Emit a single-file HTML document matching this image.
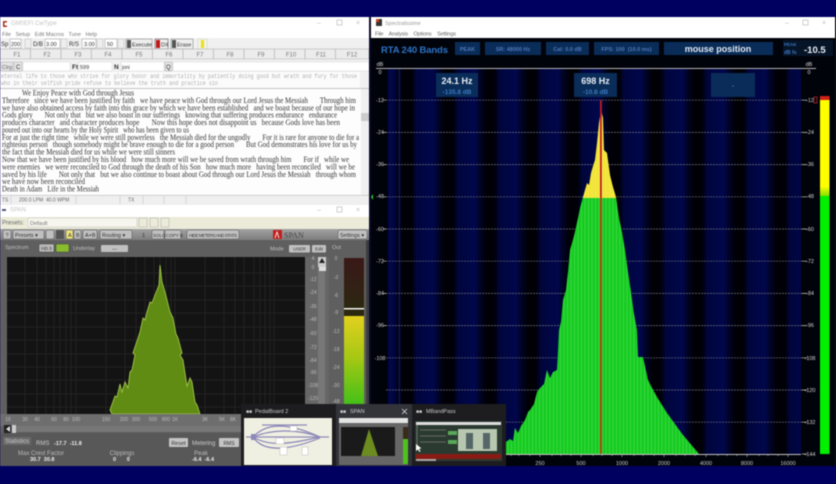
<!DOCTYPE html>
<html><head><meta charset="utf-8"><style>
html,body{margin:0;padding:0;background:#000060;width:836px;height:484px;overflow:hidden}
svg{display:block;filter:blur(.55px)}
text{font-family:"Liberation Sans",sans-serif;white-space:pre}
.s{font-family:"Liberation Serif",serif;font-size:8px;fill:#333}
.m{font-family:"Liberation Mono",monospace;font-size:6.5px;fill:#b0b0b0}
.t{font-size:6px;fill:#777;text-anchor:middle}
.g{font-size:5px;fill:#bbb;text-anchor:middle}
.l{font-size:6px;fill:#bbb;text-anchor:middle}
.b{fill:#4f78b8;font-weight:bold;font-size:5.5px;text-anchor:middle}
.d{font-size:5.5px;fill:#c0c0c0}
</style></head><body>
<svg width="836" height="484" viewBox="0 0 836 484" xmlns="http://www.w3.org/2000/svg">
<defs>
<linearGradient id="bands" gradientUnits="userSpaceOnUse" x1="540" x2="581.500" y1="0" y2="0" spreadMethod="repeat">
<stop offset="0" stop-color="#00053a"/><stop offset=".42" stop-color="#00074c"/><stop offset=".55" stop-color="#000326"/><stop offset=".72" stop-color="#000005"/><stop offset=".9" stop-color="#000007"/><stop offset="1" stop-color="#00042c"/>
</linearGradient>
<linearGradient id="spec" gradientUnits="userSpaceOnUse" x1="0" x2="0" y1="100" y2="454">
<stop offset="0" stop-color="#f2e432"/><stop offset=".2768" stop-color="#f2e432"/><stop offset=".2768" stop-color="#14cc1e"/><stop offset="1" stop-color="#14cc1e"/>
</linearGradient>
<pattern id="bars" width="3.500" height="10" patternUnits="userSpaceOnUse"><rect width="1" height="10" fill="#fff" opacity=".18"/></pattern>
<linearGradient id="meter" x1="0" x2="0" y1="0" y2="1"><stop offset="0" stop-color="#e2d01e"/><stop offset=".45" stop-color="#a8c814"/><stop offset="1" stop-color="#40c018"/></linearGradient>
<linearGradient id="mtop" x1="0" x2="0" y1="0" y2="1"><stop offset="0" stop-color="#3a1818"/><stop offset="1" stop-color="#2a2a10"/></linearGradient>
<linearGradient id="tb" x1="0" x2="0" y1="0" y2="1"><stop offset="0" stop-color="#a2a2a2"/><stop offset="1" stop-color="#7e7e7e"/></linearGradient>
<linearGradient id="mband" x1="0" x2="0" y1="0" y2="1"><stop offset="0" stop-color="#ffff00"/><stop offset=".9" stop-color="#ffff00"/><stop offset="1" stop-color="#80e000"/></linearGradient>
</defs>

<rect width="836" height="484" fill="#000060"/>

<!-- CwType window -->
<rect x="0" y="17" width="369" height="188" fill="#f4f4f4"/>
<rect x="0" y="17" width="369" height="21" fill="#fff"/>
<path d="M3 21h4v1.500h-2.500v3h2.500v1.500h-4z" fill="#b03020"/>
<text x="11" y="25" font-size="6" fill="#c4c4c4">GM0EFI CwType</text>
<text x="317" y="25" font-size="7" fill="#bbb">–</text><rect x="337" y="20" width="5" height="5" fill="none" stroke="#bbb" stroke-width=".7"/><text x="356" y="25" font-size="7" fill="#bbb">×</text>
<text x="2" y="36" font-size="5.500" fill="#777" textLength="95">File   Setup   Edit Macros   Tune   Help</text>
<rect x="0" y="38" width="369" height="11" fill="#f0f0f0"/>
<text x="1" y="46" font-size="6" fill="#333">Sp</text>
<rect x="10" y="39" width="11" height="9" fill="#fff" stroke="#999" stroke-width=".5"/><text x="11" y="46" font-size="5.500" fill="#333">200</text>
<rect x="25" y="39" width="6" height="9" fill="#eee" stroke="#bbb" stroke-width=".5"/>
<text x="33" y="46" font-size="6" fill="#333">D/B</text>
<rect x="45" y="39" width="15" height="9" fill="#fff" stroke="#999" stroke-width=".5"/><text x="46" y="46" font-size="5.500" fill="#333">3.00</text>
<rect x="61" y="39" width="6" height="9" fill="#eee" stroke="#bbb" stroke-width=".5"/>
<text x="69" y="46" font-size="6" fill="#333">R/S</text>
<rect x="82" y="39" width="14" height="9" fill="#fff" stroke="#999" stroke-width=".5"/><text x="84" y="46" font-size="5.500" fill="#333">3.00</text>
<rect x="97" y="39" width="6" height="9" fill="#eee" stroke="#bbb" stroke-width=".5"/>
<rect x="105" y="39" width="12" height="9" fill="#fff" stroke="#999" stroke-width=".5"/><text x="107" y="46" font-size="5.500" fill="#333">50</text>
<rect x="118" y="39" width="6" height="9" fill="#eee" stroke="#bbb" stroke-width=".5"/>
<rect x="126" y="39" width="26" height="10" fill="#eee" stroke="#888" stroke-width=".6"/><rect x="127" y="40" width="4" height="8" fill="#555"/><text x="132" y="46.500" font-size="5.500" fill="#333">Execute</text>
<rect x="155" y="39" width="13" height="10" fill="#eee" stroke="#555" stroke-width=".6"/><rect x="156" y="40" width="4" height="8" fill="#c01818"/><text x="161" y="46.500" font-size="5.500" fill="#333">DX</text>
<rect x="171" y="39" width="22" height="10" fill="#eee" stroke="#888" stroke-width=".6"/><rect x="172" y="40" width="4" height="8" fill="#555"/><text x="177" y="46.500" font-size="5.500" fill="#333">Erase</text>
<rect x="198" y="39" width="9" height="10" fill="#f4f4e0" stroke="#ccc" stroke-width=".5"/><rect x="201" y="40" width="3" height="8" fill="#e8e020"/>

<g fill="#ececec" stroke="#b4b4b4" stroke-width=".6">
<rect x="0" y="49" width="30.500" height="10"/><rect x="30.500" y="49" width="30.500" height="10"/><rect x="61" y="49" width="30.500" height="10"/><rect x="91.500" y="49" width="30.500" height="10"/><rect x="122" y="49" width="30.500" height="10"/><rect x="152.500" y="49" width="30.500" height="10"/><rect x="183" y="49" width="30.500" height="10"/><rect x="213.500" y="49" width="30.500" height="10"/><rect x="244" y="49" width="30.500" height="10"/><rect x="274.500" y="49" width="30.500" height="10"/><rect x="305" y="49" width="30.500" height="10"/><rect x="335.500" y="49" width="33.500" height="10"/>
</g>
<g><text class="t" x="17" y="56.500">F1</text><text class="t" x="47" y="56.500">F2</text><text class="t" x="78" y="56.500">F3</text><text class="t" x="108" y="56.500">F4</text><text class="t" x="139" y="56.500">F5</text><text class="t" x="169" y="56.500">F6</text><text class="t" x="200" y="56.500">F7</text><text class="t" x="230" y="56.500">F8</text><text class="t" x="261" y="56.500">F9</text><text class="t" x="291" y="56.500">F10</text><text class="t" x="321" y="56.500">F11</text><text class="t" x="352" y="56.500">F12</text></g>

<rect x="0" y="60" width="369" height="12" fill="#f0f0f0"/>
<rect x="1" y="62" width="12" height="9" fill="#e4e4e4" stroke="#aaa" stroke-width=".5"/><text x="2" y="69" font-size="5.500" fill="#666">Clrg</text>
<rect x="14" y="62" width="8" height="9" fill="#e4e4e4" stroke="#aaa" stroke-width=".5"/><text x="16" y="69" font-size="6" fill="#333">C</text>
<rect x="23" y="62" width="47" height="9" fill="#fff" stroke="#ccc" stroke-width=".4"/>
<text x="72" y="69" font-size="6.500" fill="#333" font-weight="bold">Ft</text>
<rect x="79" y="62" width="33" height="9" fill="#fff" stroke="#ccc" stroke-width=".4"/><text x="80" y="69" font-size="5.500" fill="#333">599</text>
<text x="114" y="69" font-size="6.500" fill="#333" font-weight="bold">N</text>
<rect x="121" y="62" width="43" height="9" fill="#fff" stroke="#ccc" stroke-width=".4"/><text x="122" y="69" font-size="5" fill="#333">joni</text>
<rect x="165" y="62" width="7" height="9" fill="#e4e4e4" stroke="#aaa" stroke-width=".5"/><text x="166" y="69" font-size="6" fill="#333">Q</text>
<rect x="173" y="62" width="196" height="9" fill="#fff" stroke="#ccc" stroke-width=".4"/>

<rect x="0" y="72" width="369" height="17" fill="#fbfbfb"/>
<rect x="0" y="88" width="369" height="1" fill="#c4c4c4"/>
<text class="m" x="1" y="78" textLength="356" lengthAdjust="spacingAndGlyphs">eternal life to those who strive for glory honor and immortality by patiently doing good but wrath and fury for those</text>
<text class="m" x="1" y="85" textLength="217" lengthAdjust="spacingAndGlyphs">who in their selfish pride refuse to believe the truth and practice sin</text>
<rect x="360" y="72" width="9" height="16" fill="#f0f0f0"/>

<rect x="0" y="89" width="369" height="106" fill="#fdfdfd"/>
<rect x="361" y="89" width="8" height="106" fill="#f0f0f0"/><rect x="361" y="113" width="8" height="8" fill="#ccc"/>
<text class="s" x="22" y="95.500" textLength="112" lengthAdjust="spacingAndGlyphs">We Enjoy Peace with God through Jesus</text>
<text class="s" x="2" y="102.900" textLength="354" lengthAdjust="spacingAndGlyphs">Therefore   since we have been justified by faith   we have peace with God through our Lord Jesus the Messiah       Through him</text>
<text class="s" x="2" y="110.300" textLength="353" lengthAdjust="spacingAndGlyphs">we have also obtained access by faith into this grace by which we have been established   and we boast because of our hope in</text>
<text class="s" x="2" y="117.700" textLength="335" lengthAdjust="spacingAndGlyphs">Gods glory       Not only that   but we also boast in our sufferings   knowing that suffering produces endurance   endurance</text>
<text class="s" x="2" y="125" textLength="338" lengthAdjust="spacingAndGlyphs">produces character   and character produces hope       Now this hope does not disappoint us   because Gods love has been</text>
<text class="s" x="2" y="132.400" textLength="187" lengthAdjust="spacingAndGlyphs">poured out into our hearts by the Holy Spirit   who has been given to us</text>
<text class="s" x="2" y="139.800" textLength="357" lengthAdjust="spacingAndGlyphs">For at just the right time   while we were still powerless   the Messiah died for the ungodly       For it is rare for anyone to die for a</text>
<text class="s" x="2" y="147.200" textLength="355" lengthAdjust="spacingAndGlyphs">righteous person   though somebody might be brave enough to die for a good person       But God demonstrates his love for us by</text>
<text class="s" x="2" y="154.600" textLength="173" lengthAdjust="spacingAndGlyphs">the fact that the Messiah died for us while we were still sinners</text>
<text class="s" x="2" y="162" textLength="347" lengthAdjust="spacingAndGlyphs">Now that we have been justified by his blood   how much more will we be saved from wrath through him       For if   while we</text>
<text class="s" x="2" y="169.400" textLength="353" lengthAdjust="spacingAndGlyphs">were enemies   we were reconciled to God through the death of his Son   how much more   having been reconciled   will we be</text>
<text class="s" x="2" y="176.800" textLength="354" lengthAdjust="spacingAndGlyphs">saved by his life       Not only that   but we also continue to boast about God through our Lord Jesus the Messiah   through whom</text>
<text class="s" x="2" y="184.200" textLength="83" lengthAdjust="spacingAndGlyphs">we have now been reconciled</text>
<text class="s" x="2" y="191.600" textLength="97" lengthAdjust="spacingAndGlyphs">Death in Adam   Life in the Messiah</text>

<rect x="0" y="195" width="369" height="10" fill="#efefef"/>
<rect x="0" y="195" width="369" height=".6" fill="#bbb"/>
<text x="2" y="201.500" font-size="5" fill="#666">TS</text><text x="19" y="201.500" font-size="5" fill="#666">200.0 LPM  40.0 WPM</text><text x="128" y="201.500" font-size="5" fill="#666">TX</text>
<path d="M11 196v8M76 196v8M120 196v8M143 196v8M164 196v8M186 196v8" stroke="#c4c4c4" stroke-width=".6"/>

<!-- SPAN window -->
<rect x="0" y="205" width="369" height="12" fill="#fff"/>
<path d="M2 209h4v2h-4z" fill="#557"/>
<text x="10" y="211.500" font-size="6" fill="#c4c4c4">SPAN</text>
<text x="317" y="212" font-size="7" fill="#bbb">–</text><rect x="337" y="207" width="5" height="5" fill="none" stroke="#bbb" stroke-width=".7"/><text x="356" y="212" font-size="7" fill="#bbb">×</text>
<rect x="0" y="217" width="369" height="12" fill="#ecebd9"/>
<text x="2" y="224.500" font-size="6" fill="#666">Presets:</text>
<rect x="28" y="218" width="109" height="9" fill="#f6f6ee" stroke="#c4c4c4" stroke-width=".5"/><text x="30" y="225" font-size="5.500" fill="#777">Default</text>
<rect x="139" y="218" width="8" height="9" fill="#ecebd9" stroke="#aaa" stroke-width=".5"/>
<rect x="150" y="218" width="8" height="9" fill="#ecebd9" stroke="#aaa" stroke-width=".5"/>
<rect x="161" y="218" width="8" height="9" fill="#ecebd9" stroke="#aaa" stroke-width=".5"/>

<rect x="0" y="229" width="369" height="11" fill="url(#tb)"/>
<g fill="#c0c0c0" stroke="#555" stroke-width=".5">
<rect x="3" y="230" width="8" height="9" rx="1.500"/><rect x="13" y="230" width="31" height="9" rx="1.500"/><rect x="46" y="230" width="8" height="9" rx="1.500"/><rect x="74" y="230" width="7" height="9" rx="1"/><rect x="83" y="230" width="14" height="9" rx="1.500"/><rect x="100" y="230" width="32" height="9" rx="1.500"/><rect x="152" y="230" width="12" height="9" rx="1"/><rect x="165" y="230" width="16" height="9" rx="1"/><rect x="187" y="230" width="52" height="9" rx="1.500"/><rect x="338" y="230" width="29" height="9" rx="1.500"/>
</g>
<rect x="56" y="230" width="8" height="9" fill="#555"/>
<rect x="66" y="230" width="7" height="9" rx="1" fill="#efe47a" stroke="#555" stroke-width=".5"/>
<g font-size="5.500" fill="#333"><text x="5.500" y="237">?</text><text x="15" y="237">Presets ▾</text><text x="68" y="237">A</text><text x="76" y="237">B</text><text x="85" y="237">A+B</text><text x="102" y="237">Routing ▾</text><text x="142" y="237">1</text><text x="153" y="237" font-size="4.500">SOLO</text><text x="166" y="237" font-size="4.500">COPY B</text><text x="189" y="237" font-size="4.500" textLength="48">HIDE METERS AND STATS</text><text x="340" y="237">Settings ▾</text></g>
<rect x="273" y="230" width="9" height="9" fill="#c02020"/><path d="M275 238l2-6 2 6" stroke="#fff" stroke-width=".8" fill="none"/>
<text x="284" y="238" font-size="8" fill="#444" style="font-family:'Liberation Serif',serif">SPAN</text>

<!-- SPAN body -->
<rect x="0" y="240" width="369" height="226" fill="#5f5f5f"/>
<rect x="366" y="240" width="3" height="165" fill="#3c3c3c"/>
<text class="d" x="5" y="249" font-size="6">Spectrum</text>
<rect x="39" y="244" width="15" height="8" rx="1" fill="#b8b8b8" stroke="#333" stroke-width=".4"/><text x="46.500" y="250" font-size="4.500" text-anchor="middle" fill="#333">HD 3</text>
<rect x="56" y="244" width="13" height="8" rx="1" fill="#8abc30" stroke="#333" stroke-width=".4"/>
<text class="d" x="73" y="250">Underlay</text>
<rect x="101" y="245" width="27" height="7" rx="1" fill="#c0c0c0"/><text x="114.500" y="250.500" font-size="5" text-anchor="middle" fill="#333">---</text>
<text class="d" x="270" y="250.500">Mode</text>
<rect x="289" y="245" width="21" height="7.500" rx="1" fill="#c0c0c0"/><text x="299.500" y="250.500" font-size="4.500" text-anchor="middle" fill="#333">USER</text>
<rect x="312" y="245" width="14" height="7.500" rx="1" fill="#c0c0c0"/><text x="319" y="250.500" font-size="4.500" text-anchor="middle" fill="#333">Edit</text>
<text class="d" x="332" y="249" font-size="6">Out</text>

<rect x="7" y="257" width="298" height="157" fill="#131313"/>
<g stroke="#303030" stroke-width=".5">
<path d="M7 273H305M7 286H305M7 300H305M7 313H305M7 327H305M7 340H305M7 354H305M7 367H305M7 380H305M7 394H305M7 407H305"/>
<path d="M25 257V414M37 257V414M46 257V414M54 257V414M60 257V414M66 257V414M71 257V414M76 257V414M106 257V414M125 257V414M136 257V414M145 257V414M154 257V414M160 257V414M166 257V414M171 257V414M175 257V414M205 257V414M224 257V414M235 257V414M244 257V414M254 257V414M260 257V414M265 257V414M270 257V414M274 257V414"/>
</g>
<path d="M160 265L159 285 155 295 152 303 150 302 147 312 145 320 143 318 140 332 138 338 136 344 133 353 135 355 132 370 130 372 128 388 125 382 122 392 120 384 117 397 115 396 110 410 112 414H200L197 405 195 402 192 382 190 378 187 386 183 360 180 355 182 353 178 338 176 334 173 318 170 312 165 292 162 282Z" fill="#608c14" stroke="#a0c44c" stroke-width=".9"/>

<rect x="305" y="257" width="24" height="157" fill="#666"/>
<rect x="318" y="257" width="7" height="150" fill="#777"/>
<rect x="318" y="257" width="8" height="10" fill="#ccc"/><path d="M322 258l-3 5h6z" fill="#222"/>
<rect x="319" y="267" width="7" height="4" fill="#ddd"/>
<g><text class="g" x="313" y="260">4</text><text class="g" x="313" y="269">0</text><text class="g" x="313" y="281">-12</text><text class="g" x="313" y="294">-24</text><text class="g" x="313" y="308">-36</text><text class="g" x="313" y="321">-48</text><text class="g" x="313" y="335">-60</text><text class="g" x="313" y="349">-72</text><text class="g" x="313" y="362">-84</text><text class="g" x="313" y="374">-96</text><text class="g" x="313" y="387">-108</text><text class="g" x="313" y="400">-120</text></g>
<g><text class="g" x="336" y="260">0</text><text class="g" x="336" y="279">-3</text><text class="g" x="336" y="297">-6</text><text class="g" x="336" y="314">-9</text><text class="g" x="336" y="333">-12</text><text class="g" x="336" y="351">-18</text><text class="g" x="336" y="369">-24</text><text class="g" x="336" y="387">-30</text><text class="g" x="336" y="403">-48</text></g>
<rect x="344" y="258" width="20" height="58" fill="url(#mtop)"/>
<rect x="344" y="316" width="20" height="90" fill="url(#meter)"/>
<rect x="344" y="308" width="20" height="1.500" fill="#f4f4f4"/>

<rect x="0" y="414" width="241" height="12" fill="#6e6e6e"/>
<g><text class="g" x="8" y="421">16</text><text class="g" x="25" y="421">30</text><text class="g" x="37" y="421">40</text><text class="g" x="54" y="421">60</text><text class="g" x="66" y="421">80</text><text class="g" x="76" y="421">100</text><text class="g" x="106" y="421">150</text><text class="g" x="124" y="421">200</text><text class="g" x="136" y="421">300</text><text class="g" x="153" y="421">500</text><text class="g" x="166" y="421">800</text><text class="g" x="175" y="421">1K</text><text class="g" x="205" y="421">3K</text><text class="g" x="222" y="421">5K</text><text class="g" x="233" y="421">8K</text></g>
<rect x="4" y="425" width="7" height="8" fill="#222"/><path d="M10 426l-4 3 4 3z" fill="#ddd"/><rect x="12" y="425" width="4" height="8" fill="#ccc"/>
<rect x="16" y="426" width="225" height="6" fill="#777"/>
<rect x="0" y="433" width="241" height="33" fill="#585858"/>
<rect x="3" y="437" width="28" height="8" fill="#6a6a6a"/>
<text x="5" y="443" font-size="6" fill="#ccc">Statistics</text>
<text x="36" y="445" font-size="6" fill="#ccc">RMS</text><text x="54" y="445" font-size="5.500" fill="#eee" font-weight="bold">-17.7  -11.8</text>
<rect x="169" y="438" width="19" height="9" rx="1" fill="#c4c4c4"/><text x="178.500" y="445" font-size="5.500" fill="#333" text-anchor="middle">Reset</text>
<text x="192" y="445" font-size="6" fill="#ccc">Metering</text>
<rect x="219" y="438" width="20" height="9" rx="1" fill="#c4c4c4"/><text x="229" y="445" font-size="5" fill="#333" text-anchor="middle">RMS</text>
<text class="l" x="41" y="455">Max Crest Factor</text><text x="30" y="461" font-size="5.500" font-weight="bold" fill="#eee">30.7  30.8</text>
<text class="l" x="122" y="455">Clippings</text><text x="113" y="461" font-size="5.500" font-weight="bold" fill="#eee">0       0</text>
<text class="l" x="201" y="455">Peak</text><text x="192" y="461" font-size="5.500" font-weight="bold" fill="#eee">-6.4  -6.4</text>

<rect x="369" y="17" width="2" height="449" fill="#0a0a28"/>

<!-- Spectrum window -->
<rect x="371" y="17" width="465" height="449" fill="#000"/>
<rect x="371" y="17" width="464" height="21" fill="#fff"/>
<rect x="376" y="19" width="6" height="7" fill="#333"/><rect x="376" y="19" width="3" height="3" fill="#d04020"/>
<text x="385" y="25" font-size="5.500" fill="#999">Spectralissime</text>
<text x="785" y="25" font-size="7" fill="#bbb">–</text><rect x="803" y="20" width="5" height="5" fill="none" stroke="#bbb" stroke-width=".7"/><text x="822" y="25" font-size="7" fill="#bbb">×</text>
<text x="375" y="35.500" font-size="5.500" fill="#666" textLength="81">File    Analysis    Options    Settings</text>
<rect x="371" y="38" width="464" height="428" fill="#01030a"/>
<text x="381" y="53" font-size="9.500" font-weight="bold" fill="#2c74c8" textLength="67">RTA 240 Bands</text>
<g fill="#0a2c58"><rect x="455" y="42" width="25" height="13"/><rect x="485" y="42" width="56" height="13"/><rect x="546" y="42" width="43" height="13"/><rect x="594" y="42" width="65" height="13"/><rect x="664" y="42" width="109" height="13"/><rect x="783" y="40" width="50" height="16" fill="#061428"/></g>
<text class="b" x="467.500" y="51">PEAK</text><text class="b" x="513" y="51">SR: 48000 Hz</text><text class="b" x="567.500" y="51">Cal: 0.0 dB</text><text class="b" x="626.500" y="51">FPS: 100  (10.0 ms)</text>
<text x="718" y="52" font-size="9" font-weight="bold" fill="#dfe8f0" text-anchor="middle">mouse position</text>
<text x="784" y="46" font-size="4.500" font-weight="bold" fill="#3a78c0">PEAK</text><text x="784" y="54" font-size="5" font-weight="bold" fill="#3a78c0">dB fs</text>
<text x="804" y="53" font-size="9.500" font-weight="bold" fill="#e8eef4">-10.5</text>

<rect x="388" y="68" width="413" height="386" fill="url(#bands)"/>
<rect x="399" y="68" width="1" height="386" fill="#101c60"/>
<rect x="376" y="68" width="440" height=".9" fill="#c8c8c8"/>
<text x="380" y="66" font-size="5.500" fill="#ddd" text-anchor="middle">dB</text><text x="380" y="74" font-size="5.500" fill="#ddd" text-anchor="middle">0</text>
<text x="809" y="66" font-size="5.500" fill="#ddd" text-anchor="middle">dB</text><text x="809" y="74" font-size="5.500" fill="#ddd" text-anchor="middle">0</text>
<g stroke="#70707f" stroke-width=".7" stroke-dasharray="2 1">
<path d="M386 100.200H802M386 132.400H802M386 164.600H802M386 196.800H802M386 229H802M386 261.200H802M386 293.400H802M386 325.600H802M386 357.800H802M386 390H802M386 422.200H802"/>
</g>
<path d="M386 100.200h-3M386 132.400h-3M386 164.600h-3M386 196.800h-3M386 229h-3M386 261.200h-3M386 293.400h-3M386 325.600h-3M802 100.200h5M802 132.400h5M802 164.600h5M802 196.800h5M802 229h5M802 261.200h5M802 293.400h5M802 325.600h5M802 357.800h5M802 390h5M802 422.200h5M802 454h5" stroke="#ccc" stroke-width=".7"/>
<g font-size="5.500" fill="#d0d0d0" text-anchor="middle"><text x="380" y="102">-12</text><text x="380" y="134">-24</text><text x="380" y="166">-36</text><text x="380" y="198">-48</text><text x="380" y="231">-60</text><text x="380" y="263">-72</text><text x="380" y="295">-84</text><text x="380" y="327">-96</text><text x="380" y="360">-108</text>
<text x="810" y="102">-12</text><text x="810" y="134">-24</text><text x="810" y="166">-36</text><text x="810" y="198">-48</text><text x="810" y="231">-60</text><text x="810" y="263">-72</text><text x="810" y="295">-84</text><text x="810" y="327">-96</text><text x="810" y="360">-108</text><text x="810" y="392">-120</text><text x="810" y="424">-132</text><text x="810" y="456">-144</text></g>
<path d="M373 194v6l-2-3z" fill="#30d030"/>

<path d="M506 454V442L510 439 513 441 515 428 518 433 521 426 525 420 528 412 530 410 534 404 537 392 540 388 544 384 547 370 550 378 553 372 557 370 559 330 561 322 563 300 566 290 568 272 570 250 574 236 578 218 580 208 583 197 585 190 587 183 589 185 591 173 593 166 595 160 597 143 599 123 601 110 603 118 604 150 607 153 610 175 613 187 616 197 619 218 622 232 625 250 628 272 631 292 634 314 637 330 638 357 643 357 648 380 652 388 657 397 667 413 683 435 699 454Z" fill="url(#spec)"/>
<path d="M506 454V442L510 439 513 441 515 428 518 433 521 426 525 420 528 412 530 410 534 404 537 392 540 388 544 384 547 370 550 378 553 372 557 370 559 330 561 322 563 300 566 290 568 272 570 250 574 236 578 218 580 208 583 197 585 190 587 183 589 185 591 173 593 166 595 160 597 143 599 123 601 110 603 118 604 150 607 153 610 175 613 187 616 197 619 218 622 232 625 250 628 272 631 292 634 314 637 330 638 357 643 357 648 380 652 388 657 397 667 413 683 435 699 454Z" fill="url(#bars)"/>
<rect x="600" y="100" width="1.800" height="354" fill="#c01c20"/>
<rect x="600" y="197" width="1.800" height="257" fill="#b04410"/>

<rect x="436" y="73" width="42" height="24" fill="#0a2c58"/>
<text x="457" y="84" font-size="9" font-weight="bold" fill="#e8eef4" text-anchor="middle">24.1 Hz</text>
<text x="457" y="94" font-size="6.500" font-weight="bold" fill="#3a78c0" text-anchor="middle">-135.8 dB</text>
<rect x="574" y="73" width="43" height="24" fill="#0a2c58"/>
<text x="595.500" y="84" font-size="9" font-weight="bold" fill="#e8eef4" text-anchor="middle">698 Hz</text>
<text x="595.500" y="94" font-size="6.500" font-weight="bold" fill="#3a78c0" text-anchor="middle">-10.8 dB</text>
<rect x="711" y="73" width="44" height="24" fill="#0a2c58"/>
<text x="733" y="88" font-size="7" font-weight="bold" fill="#3a78c0" text-anchor="middle">-</text>

<rect x="814" y="97" width="3" height="6" fill="none" stroke="#c03030" stroke-width=".7"/>
<rect x="820" y="96" width="9.500" height="4" fill="#d02018"/>
<rect x="820" y="100" width="9.500" height="96" fill="url(#mband)"/>
<rect x="820" y="196" width="9.500" height="258" fill="#00f000"/>

<rect x="506" y="454" width="295" height=".9" fill="#d8d8d8"/>
<path d="M511 454v2M519 454v2M530 454v2M540 454v3M552 454v2M561 454v2M571 454v2M581 454v3M593 454v2M602 454v2M612 454v2M622 454v3M634 454v2M643 454v2M654 454v2M664 454v3M676 454v2M685 454v2M695 454v2M706 454v3M718 454v2M727 454v2M737 454v2M747 454v3M759 454v2M768 454v2M778 454v2M788 454v3" stroke="#bbb" stroke-width=".6"/>
<g font-size="5.500" fill="#c8c8c8" text-anchor="middle"><text x="540" y="465">250</text><text x="581" y="465">500</text><text x="622" y="465">1000</text><text x="664" y="465">2000</text><text x="706" y="465">4000</text><text x="747" y="465">8000</text><text x="788" y="465">16000</text></g>
<rect x="835" y="17" width="1" height="449" fill="#111"/>
<rect x="0" y="466" width="836" height="18" fill="#000060"/>

<!-- task thumbnails -->
<rect x="241" y="404" width="265" height="62" fill="#1d1d20"/>
<rect x="336" y="404" width="76" height="62" fill="#32343a"/>
<g font-size="5.500" fill="#ccc"><text x="246" y="413" font-weight="bold" font-size="5">■■</text><text x="255" y="413">PedalBoard 2</text><text x="340" y="413" font-weight="bold" font-size="5">■■</text><text x="350" y="413">SPAN</text><text x="416" y="413" font-weight="bold" font-size="5">■■</text><text x="426" y="413">MBandPass</text></g>
<path d="M402 409l5 5M407 409l-5 5" stroke="#ddd" stroke-width=".8"/>

<rect x="244" y="418" width="88" height="47" fill="#f0f0e2"/>
<g fill="none" stroke="#8c88b8" stroke-width="1.200">
<path d="M253 437C265 424 285 421 320 437"/><path d="M253 437C270 430 295 428 320 437"/><path d="M253 437C272 437 300 437 322 437"/><path d="M253 437C270 447 290 444 320 437"/><path d="M253 437C265 455 295 448 320 438"/><path d="M246 437h7M322 437h7"/><path d="M262 425h45"/>
</g>
<rect x="251" y="434" width="5" height="6" fill="#8c88b8"/>
<g fill="#fff" stroke="#aaa" stroke-width=".4"><rect x="276" y="438" width="8" height="6"/><rect x="280" y="447" width="7" height="8"/><rect x="302" y="447" width="6" height="8"/><rect x="290" y="426" width="7" height="5"/></g>

<rect x="339" y="418" width="69" height="47" fill="#666"/>
<rect x="339" y="418" width="69" height="5" fill="#e4e4e4"/>
<rect x="341" y="427" width="54" height="29" fill="#1a1a1a"/>
<path d="M369 429L378 456H361Z" fill="#6c8c20"/>
<rect x="403" y="427" width="5" height="12" fill="#3a2a1a"/><rect x="403" y="439" width="5" height="25" fill="#50c020"/>

<rect x="415" y="421" width="87" height="40" fill="#2b3a30"/>
<rect x="416" y="422" width="85" height="3" fill="#ddd"/>
<rect x="458" y="429" width="39" height="22" fill="#b8c8b0"/>
<rect x="466" y="433" width="7" height="16" fill="#566"/><rect x="483" y="433" width="7" height="16" fill="#566"/>
<rect x="448" y="431" width="9" height="4" fill="#58a858"/><rect x="448" y="440" width="9" height="4" fill="#58a858"/>
<rect x="416" y="454" width="85" height="5" fill="#8a1a14"/>
<path d="M417 425v21M420 430h26M420 436h26M420 442h26" stroke="#999" stroke-width=".6"/>
<rect x="416" y="459" width="20" height="2" fill="#aaa"/>
<path d="M416 444l0 7 2-1.500 1.500 2.500 1-.7-1.500-2.500 2.500-.3z" fill="#fff"/>
</svg>
</body></html>
